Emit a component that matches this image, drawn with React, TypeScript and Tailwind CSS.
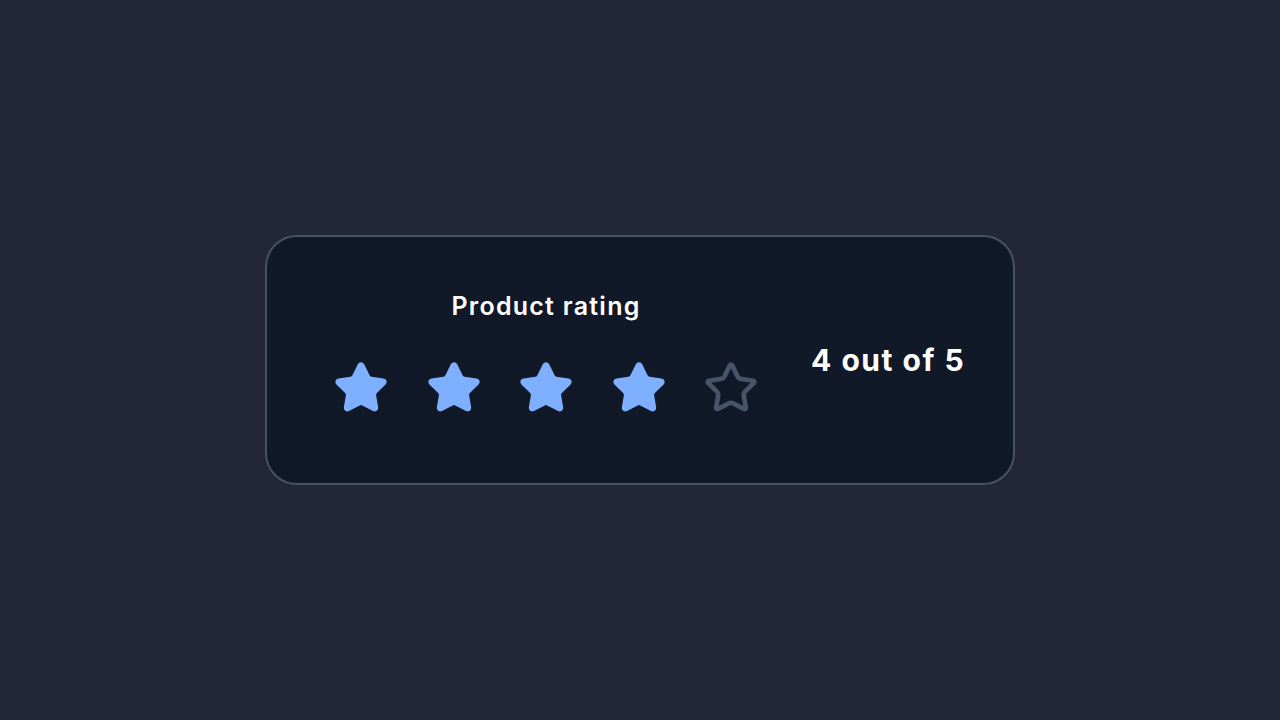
import React from "react";

const STAR =
  "M11.525 2.295a.53.53 0 0 1 .95 0l2.31 4.679a2.123 2.123 0 0 0 1.595 1.16l5.166.756a.53.53 0 0 1 .294.904l-3.736 3.638a2.123 2.123 0 0 0-.611 1.878l.882 5.14a.53.53 0 0 1-.771.56l-4.618-2.428a2.122 2.122 0 0 0-1.973 0L6.396 21.01a.53.53 0 0 1-.77-.56l.881-5.139a2.122 2.122 0 0 0-.611-1.879L2.16 9.795a.53.53 0 0 1 .294-.906l5.165-.755a2.122 2.122 0 0 0 1.597-1.16z";

function Star({ filled }: { filled: boolean }) {
  return (
    <svg
      viewBox="0 0 24 24"
      className="w-14 h-14 shrink-0"
      fill={filled ? "#7fb0ff" : "none"}
      stroke={filled ? "#7fb0ff" : "#475569"}
      strokeWidth={2}
      strokeLinecap="round"
      strokeLinejoin="round"
    >
      <path d={STAR} />
    </svg>
  );
}

export default function App() {
  const rating = 4;
  return (
    <div
      className="w-full h-[720px] bg-[#222738] flex items-center justify-center"
      style={{ fontFamily: "Inter, 'Noto Sans', sans-serif" }}
    >
      <div className="w-[750px] h-[250px] rounded-[32px] border-2 border-[#465265] bg-[#111827] flex items-center pl-[66px] gap-[52px]">
        <div className="flex flex-col items-center gap-[38px] -mt-[15px]">
          <div className="text-white text-[25px] leading-[32px] font-semibold tracking-wider">
            Product rating
          </div>
          <div className="flex gap-[36.5px]">
            {[1, 2, 3, 4, 5].map((i) => (
              <Star key={i} filled={i <= rating} />
            ))}
          </div>
        </div>
        <div className="text-white text-[30px] leading-[36px] font-bold tracking-wider">4 out of 5</div>
      </div>
    </div>
  );
}
